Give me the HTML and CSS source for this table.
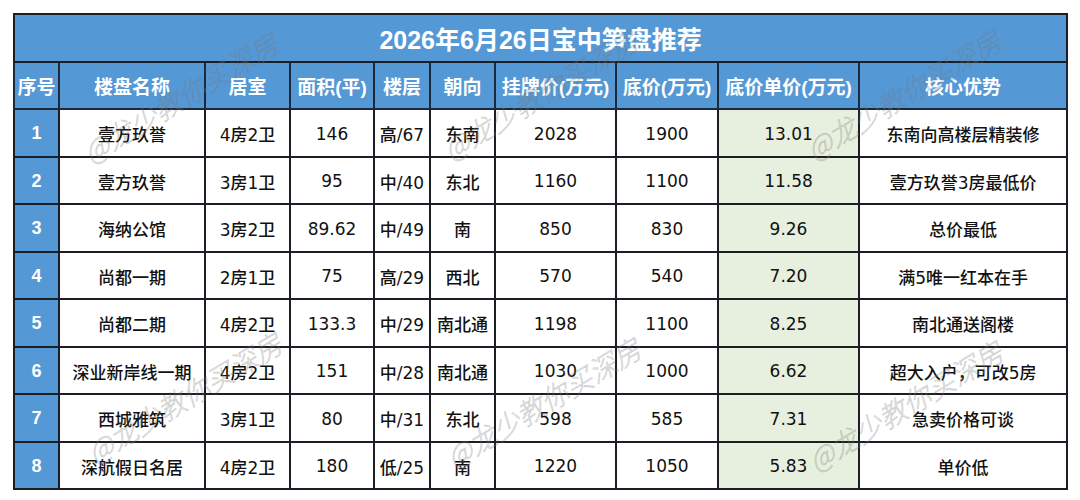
FILE: index.html
```html
<!DOCTYPE html>
<html lang="zh">
<head>
<meta charset="utf-8">
<title>2026年6月26日宝中笋盘推荐</title>
<link rel="stylesheet" href="styles.css">
</head>
<body>
<div class="page">
  <table class="deals">
    <colgroup>
      <col class="c-no"><col class="c-name"><col class="c-room"><col class="c-area"><col class="c-floor"><col class="c-dir"><col class="c-list"><col class="c-floorp"><col class="c-unit"><col class="c-adv">
    </colgroup>
    <thead>
      <tr class="title-row"><th colspan="10" class="title">2026年6月26日宝中笋盘推荐</th></tr>
      <tr class="head-row">
        <th>序号</th><th>楼盘名称</th><th>居室</th><th>面积(平)</th><th>楼层</th><th>朝向</th><th>挂牌价(万元)</th><th>底价(万元)</th><th>底价单价(万元)</th><th>核心优势</th>
      </tr>
    </thead>
    <tbody>
      <tr><td class="no">1</td><td>壹方玖誉</td><td>4房2卫</td><td>146</td><td>高/67</td><td>东南</td><td>2028</td><td>1900</td><td class="unit">13.01</td><td>东南向高楼层精装修</td></tr>
      <tr><td class="no">2</td><td>壹方玖誉</td><td>3房1卫</td><td>95</td><td>中/40</td><td>东北</td><td>1160</td><td>1100</td><td class="unit">11.58</td><td>壹方玖誉3房最低价</td></tr>
      <tr><td class="no">3</td><td>海纳公馆</td><td>3房2卫</td><td>89.62</td><td>中/49</td><td>南</td><td>850</td><td>830</td><td class="unit">9.26</td><td>总价最低</td></tr>
      <tr><td class="no">4</td><td>尚都一期</td><td>2房1卫</td><td>75</td><td>高/29</td><td>西北</td><td>570</td><td>540</td><td class="unit">7.20</td><td>满5唯一红本在手</td></tr>
      <tr><td class="no">5</td><td>尚都二期</td><td>4房2卫</td><td>133.3</td><td>中/29</td><td>南北通</td><td>1198</td><td>1100</td><td class="unit">8.25</td><td>南北通送阁楼</td></tr>
      <tr><td class="no">6</td><td>深业新岸线一期</td><td>4房2卫</td><td>151</td><td>中/28</td><td>南北通</td><td>1030</td><td>1000</td><td class="unit">6.62</td><td>超大入户，可改5房</td></tr>
      <tr><td class="no">7</td><td>西城雅筑</td><td>3房1卫</td><td>80</td><td>中/31</td><td>东北</td><td>598</td><td>585</td><td class="unit">7.31</td><td>急卖价格可谈</td></tr>
      <tr><td class="no">8</td><td>深航假日名居</td><td>4房2卫</td><td>180</td><td>低/25</td><td>南</td><td>1220</td><td>1050</td><td class="unit">5.83</td><td>单价低</td></tr>
    </tbody>
  </table>
  <div class="watermarks" aria-hidden="true">
    <span class="wm wm1">@龙少教你买深房</span>
    <span class="wm wm2">@龙少教你买深房</span>
    <span class="wm wm3">@龙少教你买深房</span>
    <span class="wm wm4">@龙少教你买深房</span>
    <span class="wm wm5">@龙少教你买深房</span>
    <span class="wm wm6">@龙少教你买深房</span>
  </div>
</div>
</body>
</html>
```
FILE: styles.css
```css
html, body {
  margin: 0;
  padding: 0;
  background: #ffffff;
}

.page {
  position: relative;
  width: 1080px;
  height: 500px;
  padding: 13px 0 0 13px;
  box-sizing: border-box;
  font-family: "DejaVu Sans", "Noto Sans CJK SC", sans-serif;
}

.deals {
  border-collapse: collapse;
  table-layout: fixed;
  width: 1053px;
  border: 2px solid #1b1e24;
}

.c-no { width: 45px; }
.c-name { width: 146px; }
.c-room { width: 85px; }
.c-area { width: 84px; }
.c-floor { width: 56px; }
.c-dir { width: 65px; }
.c-list { width: 121px; }
.c-floorp { width: 102px; }
.c-unit { width: 141px; }
.c-adv { width: 208px; }

.deals th,
.deals td {
  border: 2px solid #1b1e24;
  text-align: center;
  vertical-align: middle;
  padding: 0;
  white-space: nowrap;
  overflow: hidden;
}

.title-row { height: 48px; }
.head-row { height: 47px; }
.deals tbody tr { height: 47.5px; }

.title {
  background: #5598d6;
  color: #ffffff;
  font-family: "Liberation Sans", "Noto Sans CJK SC", sans-serif;
  font-size: 25px;
  font-weight: 700;
  border-color: #1a2a3c;
}

.head-row th {
  background: #5598d6;
  color: #ffffff;
  font-family: "Liberation Sans", "Noto Sans CJK SC", sans-serif;
  font-size: 19px;
  font-weight: 700;
  border-color: #1a2a3c;
}

.deals td {
  color: #111111;
  font-size: 17px;
  font-weight: 500;
  background: #ffffff;
  padding-top: 2px;
}

.deals td.no {
  background: #5598d6;
  color: #ffffff;
  font-weight: 700;
  font-family: "Liberation Sans", sans-serif;
  font-size: 18px;
}

.deals td.unit {
  background: #e7f0de;
}

.watermarks {
  position: absolute;
  inset: 0;
  pointer-events: none;
}

.wm {
  position: absolute;
  transform: translate(-50%, -50%) rotate(-31deg);
  font-family: "Noto Sans CJK SC", sans-serif;
  font-style: italic;
  font-size: 28px;
  font-weight: 300;
  color: rgba(140, 140, 140, 0.2);
  -webkit-text-stroke: 0.7px rgba(110, 110, 110, 0.28);
  white-space: nowrap;
}

.wm1 { left: 180px; top: 97px; }
.wm2 { left: 540px; top: 94px; }
.wm3 { left: 903px; top: 94px; }
.wm4 { left: 184px; top: 397px; }
.wm5 { left: 543px; top: 402px; }
.wm6 { left: 905px; top: 405px; }
```
